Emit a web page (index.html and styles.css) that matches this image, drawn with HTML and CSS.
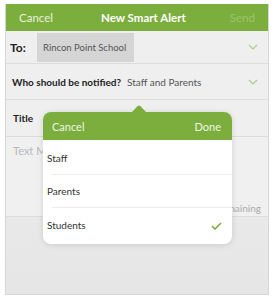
FILE: index.html
```html
<!DOCTYPE html>
<html>
<head>
<meta charset="utf-8">
<link rel="stylesheet" href="styles.css">
</head>
<body>
<div class="screen">
  <div class="navbar">
    <span class="nav-cancel">Cancel</span>
    <span class="nav-title">New Smart Alert</span>
    <span class="nav-send">Send</span>
  </div>
  <div class="row row-to">
    <span class="label">To:</span>
    <span class="chip">Rincon Point School</span>
    <svg class="chev" width="10" height="6" viewBox="0 0 10 6"><path d="M1 1 L5 5 L9 1" fill="none" stroke="#a9cd82" stroke-width="1.1"/></svg>
  </div>
  <div class="row row-who">
    <span class="label-sm">Who should be notified?</span>
    <span class="value">Staff and Parents</span>
    <svg class="chev" width="10" height="6" viewBox="0 0 10 6"><path d="M1 1 L5 5 L9 1" fill="none" stroke="#a9cd82" stroke-width="1.1"/></svg>
  </div>
  <div class="row row-title">
    <span class="label-sm">Title</span>
  </div>
  <div class="message">
    <span class="placeholder">Text Message</span>
    <span class="remaining">160 characters remaining</span>
  </div>

  <div class="popover">
    <svg class="pop-arrow" width="16" height="8" viewBox="0 0 16 8"><path d="M0 8 L6.5 1.2 Q8 -0.2 9.5 1.2 L16 8 Z" fill="#7cae3e"/></svg>
    <div class="pop-head">
      <span>Cancel</span>
      <span>Done</span>
    </div>
    <div class="pop-list">
      <div class="pop-item">Staff</div>
      <div class="pop-item">Parents</div>
      <div class="pop-item last">Students
        <svg class="check" width="11" height="8" viewBox="0 0 11 8"><path d="M1 4.2 L4 7 L10 1" fill="none" stroke="#7cae3e" stroke-width="1.6"/></svg>
      </div>
    </div>
  </div>
</div>
</body>
</html>
```
FILE: styles.css
```css
html, body {
  margin: 0;
  padding: 0;
  background: #fff;
}
body {
  font-family: Lato, "Open Sans", sans-serif;
  padding: 4px 0 0 5px;
}
.screen {
  position: relative;
  width: 262px;
  height: 290px;
  border: 1px solid #d6d6d6;
  border-top: none;
  background: linear-gradient(#f0f0f0, #e6e6e6);
  overflow: visible;
}
.navbar {
  height: 27px;
  background: #7cae3e;
  display: flex;
  align-items: center;
  justify-content: space-between;
  padding: 0 13px 0 13px;
  color: #fff;
  font-size: 11.5px;
}
.nav-cancel { color: #e8f1de; }
.nav-title { font-weight: bold; font-size: 11.5px; margin-left: 4px; }
.nav-send { color: #9cc36e; }
.row {
  display: flex;
  align-items: center;
  border-bottom: 1px solid #dcdcdc;
  background: #efefef;
  position: relative;
}
.row-to {
  height: 32px;
  padding-left: 4px;
}
.label {
  font-weight: bold;
  font-size: 12px;
  color: #222;
  width: 27px;
}
.chip {
  background: #d5d5d5;
  height: 29px;
  display: flex;
  align-items: center;
  padding: 0 7px 0 6px;
  font-size: 9.5px;
  color: #555;
  width: 84px;
}
.chev {
  position: absolute;
  right: 10px;
  top: 50%;
  margin-top: -3px;
}
.row-who {
  height: 35px;
  padding-left: 6px;
}
.label-sm {
  font-weight: bold;
  font-size: 10px;
  color: #222;
}
.value {
  font-size: 10px;
  color: #555;
  margin-left: 6px;
}
.row-title {
  height: 36px;
  padding-left: 7px;
}
.message {
  position: relative;
  height: 79px;
  border-bottom: 1px solid #dcdcdc;
  background: #f0f0f0;
}
.placeholder {
  position: absolute;
  left: 7px;
  top: 7px;
  font-size: 11px;
  color: #b8b8b8;
}
.remaining {
  position: absolute;
  right: 7px;
  bottom: 2px;
  font-size: 10px;
  color: #aaa;
}
.popover {
  position: absolute;
  left: 37px;
  top: 108px;
  width: 189px;
  border-radius: 8px;
  background: #fff;
  box-shadow: 0 1px 6px rgba(0,0,0,0.12);
}
.pop-arrow {
  position: absolute;
  left: 88px;
  top: -7px;
}
.pop-head {
  height: 28px;
  background: #7cae3e;
  border-radius: 8px 8px 0 0;
  display: flex;
  align-items: center;
  justify-content: space-between;
  padding: 0 11px 0 9px;
  color: #eef5e6;
  font-size: 11px;
}
.pop-list {
  padding-left: 4px;
  padding-top: 2px;
}
.pop-item {
  height: 32px;
  display: flex;
  align-items: center;
  font-size: 10px;
  color: #333;
  border-bottom: 1px solid #ededed;
  margin-left: 5px;
  text-indent: -5px;
  position: relative;
}
.pop-item.last {
  border-bottom: none;
  height: 34px;
  padding-bottom: 2px;
}
.check {
  position: absolute;
  right: 10px;
  top: 14px;
}
```
